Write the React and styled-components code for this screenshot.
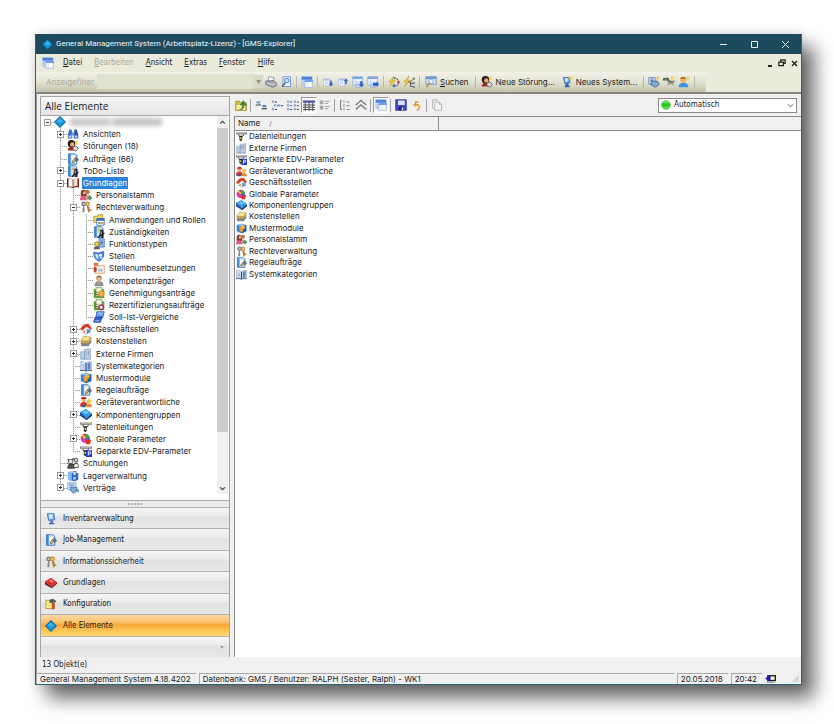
import React, { useState } from 'react';
import styled, { createGlobalStyle, css } from 'styled-components';

const GlobalStyle = createGlobalStyle`
  * {
    box-sizing: border-box;
  }

  body {
    margin: 0;
    background: #fff;
    color: #1a1a1a;
    font-family: 'Inter', 'DejaVu Sans', sans-serif;
    font-size: 8px;
    line-height: 12px;
  }

  button, input, select {
    font: inherit;
    color: inherit;
  }

  ul {
    list-style: none;
    margin: 0;
    padding: 0;
  }
`;

const narrow = css`
  font-family: 'DejaVu Sans Condensed', 'DejaVu Sans', sans-serif;
  font-size: 8px;
`;

/* ---------- icons ---------- */

const Svg = styled.svg`
  display: block;
  flex: none;
  width: ${({ $size }) => $size}px;
  height: ${({ $size }) => $size}px;
`;

const cable = (
  <>
    <path d='M0 2h16v3H0z' fill='#777' />
    <path d='M1 3h14' stroke='#ddd' />
    <path d='M4 5c0 3 1 3 2 3M11 5c0 2-1 3-3 3' stroke='#222' fill='none' strokeWidth='1.3' />
    <path d='M5 7h4v6l-2 2-2-2z' fill='#222' />
    <path d='M6 9h2v3H6z' fill='#d8e030' />
  </>
);

const note = (
  <>
    <path d='M2 1h9l2 2v12H2z' fill='#cfe6fb' stroke='#1d5fa8' />
    <path d='M2 1h3v14H2z' fill='#3c8ad6' />
  </>
);

const keys = (
  <>
    <circle cx='5' cy='4' r='2.5' fill='#bbb' stroke='#7a7a7a' strokeWidth='1.6' />
    <path d='M5 7v8M5 11H3M5 14H3' stroke='#8a8a8a' strokeWidth='2' />
    <circle cx='10' cy='4' r='2.5' fill='#f0c888' stroke='#c98a3c' strokeWidth='1.6' />
    <path d='M10 7l2 8M12 12h3M11 9h2' stroke='#b87428' strokeWidth='2' />
  </>
);

const windowShape = (
  <>
    <path d='M1 1h13v12H1z' fill='#dbe8fb' stroke='#a4bfe8' />
    <path d='M1 1h14v4H1z' fill='#4a82dc' />
    <path d='M2 7h2M2 9h2M2 11h2' stroke='#7ea2dc' />
    <path d='M5 6h10v9H5z' fill='#fff' stroke='#8fb0e4' />
    <path d='M5 5h11v3H5z' fill='#6f9fee' />
    <path d='M8 8v6' stroke='#b6cdee' />
  </>
);

const smallSheet = (
  <>
    <path d='M2 4h8v9H2z' fill='#eef5ff' stroke='#a9c2e8' />
    <path d='M2 4h8v2H2z' fill='#a4c0ee' />
    <path d='M4 8h4M4 10h4' stroke='#a9c2e8' />
  </>
);

const sheet = (
  <>
    <path d='M1 1h13v11H1z' fill='#eef5ff' stroke='#86a9dc' />
    <path d='M1 1h13v3H1z' fill='#7ca8ec' />
    <path d='M5 4v8M1 8h13' stroke='#b6cdee' />
  </>
);

const ICONS = {
  diamond: (
    <>
      <path d='M8 0l8 8-8 8-8-8z' fill='#0d5c96' />
      <path d='M8 1.500l6.500 6.500L8 14.500 1.500 8z' fill='#1498e0' />
      <path d='M8 3l4 4-4 2-4-2z' fill='#37b8f4' />
    </>
  ),
  mdi: windowShape,
  binoculars: (
    <>
      <path d='M3 2h3l1 4v8H1V9z' fill='#3c6cc0' />
      <path d='M10 2h3l2 7v5H9V6z' fill='#2a55a8' />
      <path d='M6 6h4v4H6z' fill='#6b98e0' />
      <path d='M2 10h4v3H2zM10 10h4v3h-4z' fill='#a8cbf6' />
    </>
  ),
  fault: (
    <>
      <circle cx='6' cy='5' r='5' fill='#241c18' />
      <circle cx='7' cy='6' r='3' fill='#e8a878' />
      <path d='M1 14c0-4 3-5 6-5s4 2 4 5z' fill='#9a2a22' />
      <path d='M8 9l4-1 3 3-3 4-4-2z' fill='#ddd' stroke='#555' />
      <path d='M11 1h4l-2 3h2l-4 4' fill='#f4d83c' />
    </>
  ),
  job: (
    <>
      {note}
      <path d='M6 4h5v8H6z' fill='#fff' />
      <path d='M7 11l5-6 2 2-5 6H7z' fill='#e8b440' stroke='#3a4a5c' strokeWidth='.8' />
      <path d='M10 9l3-3 3 3-3 3z' fill='#4c6c9c' />
    </>
  ),
  todo: (
    <>
      {note}
      <circle cx='8' cy='5' r='2' fill='#e8b040' />
      <path d='M10 5h4v4h2l-2 3v4h-3v-3l-3 3H6l3-5V8z' fill='#1c2430' />
      <path d='M10 7h2v4h-2z' fill='#d48a30' />
    </>
  ),
  openBook: (
    <>
      <path d='M0 2c3-1 6 0 8 2 2-2 5-3 8-2v12c-3-1-6 0-8 1-2-1-5-2-8-1z' fill='#7a1c1c' />
      <path d='M2 2c3 0 5 1 6 3v9c-1-1-4-2-6-1z' fill='#fff' />
      <path d='M8 5c1-4 4-5 6-4v11c-2 0-5 0-6 2z' fill='#f0e2c0' />
      <path d='M8 4v11' stroke='#402020' />
    </>
  ),
  people: (
    <>
      <path d='M1 4c0-4 8-4 8 1v5H1z' fill='#8a3c30' />
      <circle cx='6' cy='5' r='2' fill='#f0b890' />
      <path d='M0 15c0-5 2-6 5-6s4 2 4 6z' fill='#e05a7a' />
      <circle cx='10' cy='4' r='3' fill='#b07850' />
      <path d='M8 15c0-5 1-7 3-7 3 0 4 2 4 5z' fill='#d8a0a0' />
      <path d='M12 9h2v2h2v2h-2v2h-2v-2h-2v-2h2z' fill='#2f9a3a' />
    </>
  ),
  keys,
  appsRoles: (
    <>
      <path d='M1 3h5l1-2h6v10H1z' fill='#f4d85c' stroke='#b08c1c' />
      <path d='M5 6h10v9H5z' fill='#fff' stroke='#2a58a8' />
      <path d='M5 6h10v3H5z' fill='#2f6ad0' />
      <path d='M7 12h3' stroke='#2a7a3a' strokeWidth='2' />
      <path d='M11 12h3' stroke='#d06a2a' strokeWidth='2' />
    </>
  ),
  funcTypes: (
    <>
      <path d='M8 1h7v11H8z' fill='#9cc0ec' stroke='#3c64a4' />
      <path d='M10 4h3M10 6h3M10 8h3' stroke='#2a4c90' />
      <circle cx='5' cy='8' r='3' fill='#f4d050' stroke='#8a6a20' />
      <path d='M1 15c0-3 1-4 4-4s4 1 4 4z' fill='#5a5a5a' />
    </>
  ),
  shield: (
    <>
      <path d='M1 3l6 1 7-2c1 6-1 11-6 13C3 13 1 9 1 3z' fill='#4a8ae0' stroke='#2a58a8' />
      <path d='M3 5l4 1v7C4 11 3 8 3 5z' fill='#cfe2fa' />
      <circle cx='10' cy='7' r='2' fill='#f4f4ff' />
      <path d='M10 9l2 3' stroke='#cfe2fa' strokeWidth='2' />
    </>
  ),
  positions: (
    <>
      <path d='M3 5h12v10H3z' fill='#fdf6e8' stroke='#e08a3c' />
      <path d='M1 1h6v4H1z' fill='#e8703a' />
      <path d='M1 6l4 2v4l-4 2z' fill='#c03a2a' />
      <path d='M7 9h6v4H7z' fill='#a8c4ea' />
    </>
  ),
  person: (
    <>
      <circle cx='8' cy='4' r='3.500' fill='#8a5a34' />
      <circle cx='8' cy='5' r='2.500' fill='#f0c090' />
      <path d='M2 15c0-5 2-7 6-7s6 2 6 7z' fill='#8c9298' />
      <path d='M6 8h4l-2 5z' fill='#e8a03c' />
    </>
  ),
  approve: (
    <>
      <path d='M1 3h14v12H1z' fill='#5aa83c' />
      <path d='M4 1h8v11H4z' fill='#fdfbe8' stroke='#6a8a4a' />
      <path d='M2 7h5M2 10h5' stroke='#2a6a20' />
      <circle cx='11' cy='9' r='4' fill='#f2b23c' stroke='#c07818' />
    </>
  ),
  recert: (
    <>
      <path d='M1 3h14v12H1z' fill='#5aa83c' />
      <path d='M4 1h8v11H4z' fill='#fdfbe8' stroke='#6a8a4a' />
      <path d='M2 7h5M2 10h5' stroke='#2a6a20' />
      <circle cx='11' cy='11' r='3' fill='#fff' stroke='#c0285a' strokeWidth='2' />
    </>
  ),
  compare: (
    <>
      <path d='M5 1h10l-2 8H4z' fill='#6ca4f4' stroke='#2450a0' />
      <path d='M3 8h9l-2 7H1z' fill='#2f62d0' stroke='#1c3c8c' />
      <path d='M7 3h6M3 13h6' stroke='#cfe0fa' />
    </>
  ),
  house: (
    <>
      <path d='M3 8l5-4 6 4v4l-6 3-5-3z' fill='#f2f5f9' stroke='#a8b4c4' strokeWidth='.6' />
      <path d='M0 8l5-6 6-1 5 6-2 2-5-4-6 5z' fill='#d8401c' />
      <path d='M9 8l5 1v3l-5 3z' fill='#5c94d0' />
      <path d='M5 10h2v3H5z' fill='#e08030' />
    </>
  ),
  coins: (
    <>
      <path d='M5 2l10 1-4 5H1z' fill='#f8e08c' stroke='#b88c30' />
      <path d='M1 8h10l4-5v4l-4 5H1z' fill='#c89c48' />
      <path d='M1 11h10l4-4v3l-4 5H2z' fill='#7c828c' />
      <path d='M6 4h5' stroke='#fff8d8' />
    </>
  ),
  building: (
    <>
      <path d='M1 5h5v10H1zM6 2l8-1v14H6z' fill='#b4cae2' stroke='#86a2c2' />
      <path d='M8 4h1v9M11 4h1v9' stroke='#dfeaf6' />
      <path d='M3 7h2M3 10h2' stroke='#e8f0fa' />
    </>
  ),
  books: (
    <>
      <path d='M1 2c3 0 5 0 7 2 2-2 4-2 7-2v11c-3 0-5 0-7 2-2-2-4-2-7-2z' fill='#dde7f6' stroke='#8aa0c4' />
      <path d='M8 4v10' stroke='#2a4480' strokeWidth='1.6' />
      <path d='M10 4l4-1v9l-4 1z' fill='#5f84c4' />
      <path d='M3 5l3 1v6l-3-1z' fill='#a8bfe2' />
      <path d='M0 14h6l2 1 2-1h6' stroke='#203c70' fill='none' />
    </>
  ),
  cube: (
    <>
      <path d='M1 3l7-2 7 2v9l-7 3-7-3z' fill='#2f86dc' />
      <path d='M1 3l7 2 7-2-7-2z' fill='#8cc8f8' />
      <path d='M8 5l7-2v9l-7 3z' fill='#1c5cb0' />
      <path d='M5 5l5 1v7l-5-1z' fill='#f49a28' />
      <circle cx='10' cy='6' r='3' fill='#f8b040' />
    </>
  ),
  devices: (
    <>
      <circle cx='5' cy='5' r='3' fill='#f0a878' />
      <path d='M1 4c1-4 7-4 8 0z' fill='#b03020' />
      <path d='M0 14c0-5 2-6 5-6s5 1 5 6z' fill='#d83c2c' />
      <circle cx='12' cy='7' r='3' fill='#f4c04c' />
      <path d='M8 15c0-4 2-5 4-5s4 1 4 5z' fill='#e8902c' />
      <path d='M2 12h5v3H2z' fill='#2c5ca8' />
    </>
  ),
  component: (
    <>
      <path d='M0 4l8-4 8 6-7 6z' fill='#2c9ae8' />
      <path d='M0 4v5l9 6v-3z' fill='#1c4c98' />
      <path d='M9 12v3l7-6V6z' fill='#123464' />
      <path d='M3 4l5-2 4 3-4 2z' fill='#74ccf8' />
    </>
  ),
  cable,
  params: (
    <>
      <circle cx='7' cy='7' r='6' fill='#e03c50' />
      <path d='M7 1a6 6 0 0 1 6 6H7z' fill='#38a848' />
      <path d='M7 7h6a6 6 0 0 1-4 6z' fill='#3c60e0' />
      <path d='M1 7h6v6a6 6 0 0 1-6-6z' fill='#d83cc0' />
      <path d='M8 9l7 0-2 6H8z' fill='#e03020' />
      <path d='M3 3l4 4' stroke='#f8e04c' strokeWidth='2' />
    </>
  ),
  parked: (
    <>
      {cable}
      <path d='M8 7h8v9H8z' fill='#1c34c8' />
      <path d='M11 14V9h2a1.500 1.500 0 0 1 0 3h-2' fill='none' stroke='#fff' strokeWidth='1.300' />
    </>
  ),
  training: (
    <>
      <path d='M1 3l2 2M9 2L7 4' stroke='#222' strokeWidth='1.500' />
      <circle cx='5' cy='6' r='3' fill='#e8e8e8' stroke='#333' />
      <path d='M1 15c0-4 2-6 5-6s4 2 4 6z' fill='#5a5a5a' stroke='#222' />
      <circle cx='12' cy='4' r='2.500' fill='#c8d8b0' stroke='#333' />
      <path d='M9 14c0-5 1-6 3-6s4 2 3 6z' fill='#e8f0d8' stroke='#333' />
      <path d='M0 8l5 3 9-3' stroke='#333' fill='none' />
    </>
  ),
  storage: (
    <>
      <path d='M1 3l5-2v14l-5-2z' fill='#88bcf4' />
      <path d='M6 4h9v9l-5 2-4-1z' fill='#2c68c8' />
      <path d='M8 2h4v5H8z' fill='#dfe8f4' stroke='#3c64a4' />
      <circle cx='10' cy='11' r='2' fill='#8cd0fa' />
    </>
  ),
  contract: (
    <>
      <path d='M1 1h11v9H1z' fill='#dcebfa' stroke='#6c94c4' />
      <path d='M3 3h7M3 5h7M3 7h4' stroke='#5c88bc' />
      <path d='M5 7h8v5l-4 3-4-3z' fill='#7ab0dc' stroke='#3a6898' />
      <path d='M12 10h4v3h-4z' fill='#4c84b8' />
    </>
  ),
  monitor: (
    <>
      <path d='M3 1h9l1 8-8 1z' fill='#7cb4f4' stroke='#2c64b8' />
      <path d='M5 2h5v5l-4 1z' fill='#e0f0ff' />
      <path d='M7 10h4v3H7z' fill='#4478c8' />
      <path d='M5 15l1-2h5l2 2z' fill='#3c60a0' />
    </>
  ),
  redBook: (
    <>
      <path d='M0 6l8-5 8 6-7 6z' fill='#e02c2c' />
      <path d='M0 6v4l9 5v-2z' fill='#7c1414' />
      <path d='M9 13v2l7-6V7z' fill='#5c1c1c' />
      <path d='M5 5l3-2 4 3-3 2z' fill='#f87c70' />
    </>
  ),
  config: (
    <>
      <path d='M1 3h5l1 2h5v9H1z' fill='#f8e880' stroke='#a89430' />
      <path d='M6 3c3-3 7-2 9 2l-2 1-2-1-1 2-4-1z' fill='#4c5460' />
      <path d='M9 6h4v9H9z' fill='#c8542c' />
    </>
  ),
  printer: (
    <>
      <path d='M5 1l7 1-1 6-7-1z' fill='#f4f8ff' stroke='#7c8898' />
      <path d='M1 7l11-1 3 3v4l-5 2-9-4z' fill='#a4a8ac' stroke='#5c6068' />
      <path d='M2 9l8 3 4-2' stroke='#eee' fill='none' />
    </>
  ),
  preview: (
    <>
      <path d='M4 1h10v13H4z' fill='#eef6ff' stroke='#4c84d8' />
      <circle cx='9' cy='6' r='3' fill='#bfe0fa' stroke='#2c60b0' />
      <path d='M7 9l-4 5' stroke='#3c64a8' strokeWidth='2' />
    </>
  ),
  sheetDown: (
    <>
      {smallSheet}
      <path d='M11 6h2v4h2l-3 4-3-4h2z' fill='#2c60c8' />
    </>
  ),
  sheetUp: (
    <>
      {smallSheet}
      <path d='M11 11h2V7h2l-3-4-3 4h2z' fill='#2c60c8' />
    </>
  ),
  sheetPlus: (
    <>
      {sheet}
      <path d='M5 11h6v4H5z' fill='#c4d8f6' stroke='#86a9dc' />
      <path d='M11 7h3v4h2l-3 4-4-4h2z' fill='#2460d0' />
    </>
  ),
  sheetMinus: (
    <>
      {sheet}
      <path d='M5 11h6v4H5z' fill='#c4d8f6' stroke='#86a9dc' />
      <path d='M8 9h5V7l3 4-3 4v-2H8z' fill='#2460d0' />
    </>
  ),
  bolt: (
    <>
      <path d='M8 0L1 8h4l-3 6 8-8H6z' fill='#f6cc34' stroke='#b08a20' strokeWidth='.6' />
      <path d='M9 3c4 0 5 3 5 6s-3 5-6 4' stroke='#667' fill='none' strokeWidth='1.500' strokeDasharray='2 1' />
      <circle cx='9' cy='3' r='1.500' fill='#58a048' />
      <circle cx='14' cy='8' r='1.800' fill='#c04848' />
      <circle cx='8' cy='13' r='2' fill='#4868c0' />
    </>
  ),
  boltTree: (
    <>
      <path d='M8 0L1 8h4l-3 6 8-8H6z' fill='#f6cc34' stroke='#b08a20' strokeWidth='.6' />
      <path d='M7 8h3v6h4M10 8l4-4M10 10h4' stroke='#556' fill='none' strokeWidth='1.300' />
      <path d='M13 2h3v3h-3zM13 8h3v3h-3zM13 13h3v3h-3z' fill='#8a8f88' />
    </>
  ),
  search: (
    <>
      <path d='M1 1h14v10H1z' fill='#cfe6fa' stroke='#5c88c0' />
      <path d='M1 1h14v3H1z' fill='#6c9cdc' />
      <circle cx='8' cy='7' r='3' fill='#e8f6ff' stroke='#88a' />
      <path d='M6 9l-4 6' stroke='#c08c38' strokeWidth='2' />
    </>
  ),
  newSystem: (
    <>
      <path d='M3 2h8l1 7-7 1z' fill='#6cb0f4' stroke='#2c58b0' />
      <path d='M5 3h4v4l-3 1z' fill='#d8ecff' />
      <path d='M6 10h4v3H6zM4 15l2-2h5l1 2z' fill='#3858a8' />
      <path d='M13 0v6M10 3h6M11 1l4 4M15 1l-4 4' stroke='#f4cc38' />
    </>
  ),
  newContract: (
    <>
      <path d='M1 2h9v9H1z' fill='#cfe2f6' stroke='#5c84b8' />
      <path d='M3 4h5M3 6h5' stroke='#3c68a8' />
      <path d='M4 7h9l2 4-5 4-6-3z' fill='#7ca8cc' stroke='#3a5c80' />
      <path d='M13 0v6M10 3h6' stroke='#f0cc40' strokeWidth='1.500' />
    </>
  ),
  newCable: (
    <>
      <path d='M0 3l7-1 2 4 6 1v2L7 9 5 6 0 6z' fill='#4a6a4a' />
      <path d='M3 4l11 8M6 12l9-6' stroke='#8a9088' strokeWidth='1.600' />
      <path d='M12 0v5M10 2h5' stroke='#f0cc40' strokeWidth='1.500' />
    </>
  ),
  newPerson: (
    <>
      <circle cx='7' cy='5' r='4' fill='#f0b060' />
      <path d='M3 4c0-4 7-4 8 0z' fill='#b87828' />
      <path d='M1 15c0-4 2-6 6-6s7 2 7 6z' fill='#3c94e0' />
      <path d='M13 0v6M10 3h6' stroke='#f4d048' strokeWidth='1.500' />
    </>
  ),
  folderUp: (
    <>
      <path d='M1 3h5l2 2h7v10H1z' fill='#e8c040' stroke='#8a6c18' />
      <path d='M1 7h12l2 8H1z' fill='#fae88c' stroke='#8a6c18' strokeWidth='.5' />
      <path d='M6 14c3 0 4-3 4-6H7l4-6 4 6h-3c0 4-2 7-6 6z' fill='#2f9438' stroke='#1c6420' strokeWidth='.5' />
    </>
  ),
  largeIcons: (
    <>
      <path d='M2 3h5v3H2z' fill='#7ca0dc' />
      <path d='M1 8h7' stroke='#555' strokeWidth='1.500' />
      <path d='M10 8h5v3h-5z' fill='#5c80c8' />
      <path d='M9 13h7' stroke='#444' strokeWidth='1.500' />
    </>
  ),
  smallIcons: (
    <>
      <path d='M1 2h3v3H1zM4 7h3v3H4zM1 12h3v3H1zM9 7h3v3H9z' fill='#88a8e0' />
      <path d='M5 4h3M8 9h1M5 14h3M13 9h3' stroke='#444' strokeWidth='1.500' />
    </>
  ),
  listView: (
    <>
      <path d='M0 2h3v3H0zM0 7h3v3H0zM0 12h3v3H0zM9 2h3v3H9zM9 7h3v3H9zM9 12h3v3H9z' fill='#88a8e0' />
      <path d='M4 4h3M4 9h3M4 14h3M13 4h3M13 9h3M13 14h3' stroke='#555' strokeWidth='1.300' />
    </>
  ),
  detailView: (
    <>
      <path d='M0 2h16v3H0z' fill='#4850a0' />
      <path d='M0 8h16M0 11h16M0 14h16M3 5v11M8 5v11M13 5v11' stroke='#555' strokeWidth='1.400' />
    </>
  ),
  tiles: (
    <>
      <path d='M1 2h5v5H1zM1 9h5v5H1z' fill='#a8a8a8' />
      <path d='M8 3h6M8 6h4M8 10h6M8 13h4' stroke='#a0a0a0' strokeWidth='1.500' />
    </>
  ),
  groups: (
    <>
      <path d='M4 2H2v12h2' stroke='#777' fill='none' strokeWidth='1.300' />
      <path d='M5 2h3v3H5zM5 7h3v3H5zM5 12h3v3H5z' fill='#bbb' />
      <path d='M10 4h4M10 9h4M10 14h4' stroke='#888' strokeWidth='1.300' />
    </>
  ),
  collapse: (
    <path d='M1 8l7-6 7 6M1 14l7-6 7 6' stroke='#7c7c7c' fill='none' strokeWidth='2' />
  ),
  save: (
    <>
      <path d='M1 1h14v14H1z' fill='#4848c8' stroke='#20208c' />
      <path d='M4 2h9v6H4z' fill='#d8e4fa' />
      <path d='M5 10h7v5H5z' fill='#1c1c6c' />
      <path d='M9 11h2v4H9z' fill='#e8e8f4' />
    </>
  ),
  undo: (
    <path
      d='M10 4H6v4c3-1 5 0 5 3s-1 3-3 4M3 7l3 2 1-3'
      stroke='#f09434'
      fill='none'
      strokeWidth='2'
    />
  ),
  copy: (
    <path d='M2 1h6v2M2 1v11h3M5 4h6l3 3v8H5zM11 4v3h3' stroke='#b0b0b0' fill='#f6f6f6' strokeWidth='1.200' />
  ),
  session: (
    <>
      <path d='M3 3h13v9H3z' fill='#222' />
      <path d='M8 5h6v5H8z' fill='#f4f4e8' />
      <path d='M0 8l6-4v8z' fill='#1c1ce0' />
      <path d='M2 13h11v1H2z' fill='#777' />
    </>
  ),
};

const Icon = ({ name, size = 12 }) => (
  <Svg $size={size} viewBox='0 0 16 16' aria-hidden='true'>
    {ICONS[name]}
  </Svg>
);

/* ---------- window ---------- */

const Desktop = styled.div`
  min-height: 100vh;
  display: flex;
  padding: 34px 32px 39px 35px;
`;

const Window = styled.div`
  flex: 1;
  min-width: 0;
  display: flex;
  flex-direction: column;
  border: 1px solid #2b6176;
  border-top: 0;
  background: #f0f0f0;
  box-shadow: 12px 13px 18px rgba(0, 0, 0, 0.6), 0 0 10px rgba(0, 0, 0, 0.12);
`;

const TitleBar = styled.header`
  display: flex;
  align-items: center;
  height: 20px;
  padding-left: 6px;
  background: #1d4b5e;
  color: #f2f6f8;
`;

const TitleText = styled.h1`
  flex: 1;
  margin: 0 0 0 3px;
  font-family: 'Roboto', 'Open Sans', sans-serif;
  font-size: 8px;
  font-weight: 400;
  white-space: nowrap;
`;

const CaptionButton = styled.button`
  display: grid;
  place-items: center;
  width: ${({ $small }) => ($small ? 12 : 31)}px;
  height: ${({ $small }) => ($small ? 12 : 20)}px;
  padding: 0;
  border: 0;
  background: none;
`;

const MenuBar = styled.nav`
  ${narrow}
  display: flex;
  align-items: center;
  height: 18px;
  padding: 0 1px 0 6px;
  background: #ebebdc;
`;

const MenuButton = styled.button`
  margin-left: ${({ $first }) => ($first ? 3 : 0)}px;
  padding: 0 6px;
  border: 0;
  background: none;
  line-height: 12px;

  &:disabled {
    color: #a9a99d;
  }
`;

const Spacer = styled.span`
  flex: 1;
`;

const ToolArea = styled.div`
  background: #ebebdc;
  border-bottom: 2px solid #86867e;
`;

const Toolbar = styled.div`
  display: flex;
  align-items: center;
  width: max-content;
  height: 20px;
  padding: 0 9px 1px 10px;
  border-radius: 0 0 2px 0;
  background: linear-gradient(#f3f3ea, #e2e2d3 50%, #c3c3ad);
`;

const FilterLabel = styled.label`
  width: 51px;
  color: #a9a99d;
`;

const FilterInput = styled.input`
  width: 157px;
  height: 15px;
  padding: 0 2px;
  border: 0;
  background: #e1e1d0;
`;

const FilterArrow = styled.button`
  width: 9px;
  height: 13px;
  padding: 0;
  border: 0;
  background: #dadac9;
  color: #8d8d80;
  font-size: 5px;
  line-height: 12px;
`;

const ToolButton = styled.button`
  display: flex;
  align-items: center;
  justify-content: center;
  gap: 3px;
  min-width: 15px;
  height: 16px;
  padding: ${({ $labelled }) => ($labelled ? '0 3px' : '0 1px')};
  border: 0;
  background: none;
  white-space: nowrap;
`;

const Separator = styled.span`
  width: 1px;
  height: 12px;
  margin: 0 2px 0 3px;
  background: #b9b9ab;
`;

/* ---------- body ---------- */

const Body = styled.main`
  flex: 1;
  display: flex;
  min-height: 0;
  padding-left: 3px;
  border-left: 1px solid #9a9a9a;
`;

const Sidebar = styled.aside`
  display: flex;
  flex-direction: column;
  flex: none;
  width: 190px;
  margin-top: 2px;
  border: 1px solid #a5a5a5;
  border-bottom: 0;
`;

const SidebarTitle = styled.h2`
  margin: 0;
  padding-left: 4px;
  font-family: 'Open Sans', 'Noto Sans', sans-serif;
  font-size: 10px;
  font-weight: 400;
  line-height: 18px;
  background: linear-gradient(#f6f6f6, #e6e6e6);
  border-bottom: 1px solid #a5a5a5;
`;

const TreePane = styled.div`
  flex: 1;
  display: flex;
  padding-bottom: 6px;
  background: #fff;
`;

const Tree = styled.ul`
  flex: 1;
  display: flex;
  flex-direction: column;
`;

const TreeRow = styled.li`
  flex: 1 1 12px;
  display: flex;
  align-items: center;
`;

const dots = 'repeating-linear-gradient(#9c9c9c 0 1px, #e4e4e4 1px 2px)';
const dotsAcross =
  'repeating-linear-gradient(90deg, #9c9c9c 0 1px, #e4e4e4 1px 2px)';

const Guide = styled.span`
  align-self: stretch;
  display: flex;
  align-items: center;
  justify-content: center;
  width: 13px;
  background-repeat: no-repeat;
  background-image: ${({ $line }) => ($line ? dots : 'none')},
    ${({ $branch }) => ($branch ? dotsAcross : 'none')};
  background-position: 6px 0, 6px 6px;
  background-size: 1px ${({ $line }) => ($line === 'half' ? '6px' : '100%')},
    7px 1px;
`;

const Toggle = styled.button`
  display: grid;
  place-items: center;
  width: 7px;
  height: 7px;
  padding: 0;
  border: 1px solid #9a9a9a;
  background: #fff;
`;

const TreeLabel = styled.span`
  margin-left: 3px;
  padding: 0 1px;
  white-space: nowrap;
  line-height: 12px;
  ${({ $selected }) =>
    $selected &&
    css`
      background: #2a84d8;
      color: #fff;
    `}
`;

const Redacted = styled.span`
  width: 92px;
  height: 8px;
  margin-left: 4px;
  background: linear-gradient(90deg, #c9c9c9 40%, #dedede 45%, #c4c4c4 50%);
  filter: blur(2px);
`;

const ScrollBar = styled.div`
  display: flex;
  flex-direction: column;
  width: 11px;
  margin-right: 1px;
  background: #f0f0f0;
`;

const ScrollButton = styled.button`
  display: grid;
  place-items: center;
  height: 12px;
  padding: 0;
  border: 0;
  background: none;
`;

const ScrollTrack = styled.div`
  flex: 1;
`;

const ScrollThumb = styled.div`
  height: 86%;
  background: #cdcdcd;
`;

const Splitter = styled.div`
  display: flex;
  align-items: center;
  justify-content: center;
  height: 7px;
  border-top: 1px solid #a5a5a5;
  background: #ececec;
  gap: 1px;
`;

const Grip = styled.span`
  width: 2px;
  height: 2px;
  background: #b4b4b4;
`;

const NavList = styled.ul`
  display: grid;
  grid-template-rows: repeat(7, 1fr);
  height: 150px;
`;

const NavButton = styled.button`
  ${narrow}
  display: flex;
  align-items: center;
  gap: 6px;
  width: 100%;
  height: 100%;
  padding: 1px 4px 0;
  border: 0;
  border-top: 1px solid #b0b0b0;
  background: ${({ $active }) =>
    $active
      ? 'linear-gradient(#fbd9a4, #fcc069 35%, #fba836 45%, #fddc70)'
      : 'linear-gradient(#f5f5f5, #ececec 40%, #e2e2e2 45%, #e8e8e8)'};
`;

const NavMore = styled(NavButton)`
  justify-content: flex-end;
`;

const Content = styled.section`
  flex: 1;
  min-width: 0;
  display: flex;
  flex-direction: column;
  margin-left: 3px;
`;

const ViewBar = styled.div`
  display: flex;
  align-items: center;
  height: 22px;
  padding-right: 4px;
`;

const ViewButton = styled.button`
  display: grid;
  place-items: center;
  width: 16px;
  height: 16px;
  padding: 0;
  border: 1px solid ${({ $pressed }) => ($pressed ? '#9a9a9a' : 'transparent')};
  border-right-color: ${({ $pressed }) => ($pressed ? '#fff' : 'transparent')};
  border-bottom-color: ${({ $pressed }) => ($pressed ? '#fff' : 'transparent')};
  background: ${({ $pressed }) => ($pressed ? '#f8f8f8' : 'none')};
`;

const ViewSeparator = styled.span`
  width: 1px;
  height: 13px;
  margin: 0 2px 0 1px;
  background: #a5a5a5;
`;

const ModeBox = styled.label`
  ${narrow}
  display: flex;
  align-items: center;
  width: 139px;
  height: 15px;
  padding: 0 2px;
  border: 1px solid #8c8c8c;
  background: #fff;
`;

const Led = styled.span`
  width: 10px;
  height: 10px;
  margin-right: 3px;
  border: 1px solid #7fc87f;
  border-radius: 50%;
  background: linear-gradient(#8cea7c, #17c414 45%, #5ef04e);
`;

const ModeSelect = styled.select`
  flex: 1;
  height: 12px;
  padding: 0;
  border: 0;
  background: none;
  appearance: none;
`;

const ListPane = styled.div`
  flex: 1;
  margin-left: 1px;
  border-left: 1px solid #8a8a8a;
  border-top: 1px solid #8a8a8a;
  background: #fff;
`;

const ObjectTable = styled.table`
  width: 100%;
  border-collapse: collapse;
  table-layout: fixed;

  thead tr {
    height: 13px;
    background: #f0f0f0;
    border-bottom: 1px solid #8a8a8a;
  }

  thead th {
    padding: 0 3px;
    font-weight: 400;
    line-height: 12px;
    text-align: left;
  }

  th:first-child {
    width: 203px;
    border-right: 1px solid #8a8a8a;
  }

  tbody {
    display: grid;
    grid-template-rows: repeat(13, 1fr);
    height: 149px;
  }

  td {
    display: flex;
    align-items: center;
    gap: 2px;
    height: 100%;
    padding: 0 0 0 1px;
    line-height: 11px;
    white-space: nowrap;
  }
`;

const SortMark = styled.span`
  margin-left: 9px;
  font-size: 7px;
  color: #777;
`;

const CountBar = styled.div`
  ${narrow}
  height: 16px;
  padding-left: 5px;
  border-left: 1px solid #9a9a9a;
  line-height: 16px;
`;

const StatusBar = styled.footer`
  display: flex;
  gap: 3px;
  height: 11px;
  padding-right: 2px;
  line-height: 10px;
`;

const StatusCell = styled.span`
  flex: ${({ $grow }) => ($grow ? 1 : 'none')};
  padding: 0 5px 0 3px;
  border-top: 1px solid #aaa;
  border-left: 1px solid #aaa;
  white-space: nowrap;
`;

const StatusIcon = styled.span`
  display: flex;
  align-items: center;
  justify-content: space-between;
  width: 34px;
`;

/* ---------- data ---------- */

const TREE = [
  [1, 'binoculars', 'Ansichten', '+'],
  [1, 'fault', 'Störungen (18)'],
  [1, 'job', 'Aufträge (66)'],
  [1, 'todo', 'ToDo-Liste', '+'],
  [1, 'openBook', 'Grundlagen', '-'],
  [2, 'people', 'Personalstamm'],
  [2, 'keys', 'Rechteverwaltung', '-'],
  [3, 'appsRoles', 'Anwendungen und Rollen'],
  [3, 'todo', 'Zuständigkeiten'],
  [3, 'funcTypes', 'Funktionstypen'],
  [3, 'shield', 'Stellen'],
  [3, 'positions', 'Stellenumbesetzungen'],
  [3, 'person', 'Kompetenzträger'],
  [3, 'approve', 'Genehmigungsanträge'],
  [3, 'recert', 'Rezertifizierungsaufträge'],
  [3, 'compare', 'Soll-Ist-Vergleiche'],
  [2, 'house', 'Geschäftsstellen', '+'],
  [2, 'coins', 'Kostenstellen', '+'],
  [2, 'building', 'Externe Firmen', '+'],
  [2, 'books', 'Systemkategorien'],
  [2, 'cube', 'Mustermodule'],
  [2, 'job', 'Regelaufträge'],
  [2, 'devices', 'Geräteverantwortliche'],
  [2, 'component', 'Komponentengruppen', '+'],
  [2, 'cable', 'Datenleitungen'],
  [2, 'params', 'Globale Parameter', '+'],
  [2, 'parked', 'Geparkte EDV-Parameter'],
  [1, 'training', 'Schulungen'],
  [1, 'storage', 'Lagerverwaltung', '+'],
  [1, 'contract', 'Verträge', '+'],
];

const OBJECTS = [
  ['cable', 'Datenleitungen'],
  ['building', 'Externe Firmen'],
  ['parked', 'Geparkte EDV-Parameter'],
  ['devices', 'Geräteverantwortliche'],
  ['house', 'Geschäftsstellen'],
  ['params', 'Globale Parameter'],
  ['component', 'Komponentengruppen'],
  ['coins', 'Kostenstellen'],
  ['cube', 'Mustermodule'],
  ['people', 'Personalstamm'],
  ['keys', 'Rechteverwaltung'],
  ['job', 'Regelaufträge'],
  ['books', 'Systemkategorien'],
];

const NAV = [
  ['monitor', 'Inventarverwaltung'],
  ['job', 'Job-Management'],
  ['keys', 'Informationssicherheit'],
  ['redBook', 'Grundlagen'],
  ['config', 'Konfiguration'],
  ['diamond', 'Alle Elemente'],
];

const MENU = ['Datei', 'Bearbeiten', 'Ansicht', 'Extras', 'Fenster', 'Hilfe'];

const TOOLS = [
  ['printer'],
  ['preview'],
  null,
  ['mdi'],
  null,
  ['sheetDown'],
  ['sheetUp'],
  ['sheetPlus'],
  ['sheetMinus'],
  null,
  ['bolt'],
  ['boltTree'],
  null,
  ['search', 'Suchen', true],
  null,
  ['fault', 'Neue Störung...'],
  ['newSystem', 'Neues System...'],
  null,
  ['newContract'],
  ['newCable'],
  ['newPerson'],
  null,
];

const VIEW_TOOLS = [
  'folderUp',
  null,
  'largeIcons',
  'smallIcons',
  'listView',
  'detailView',
  'tiles',
  null,
  'groups',
  'collapse',
  null,
  'mdi',
  null,
  'save',
  'undo',
  null,
  'copy',
];

const PRESSED = ['detailView', 'mdi'];

/* ---------- parts ---------- */

const Mnemonic = ({ text }) => (
  <>
    <u>{text[0]}</u>
    {text.slice(1)}
  </>
);

const Stroke = ({ d, size = 9, color = '#444', width = 1 }) => (
  <Svg $size={size} viewBox='0 0 9 9' aria-hidden='true'>
    <path d={d} fill='none' stroke={color} strokeWidth={width} />
  </Svg>
);

// a branch line stops at its node when no later row has the same level
const hasNext = (index, level) => {
  for (let i = index + 1; i < TREE.length; i++) {
    if (TREE[i][0] < level) return false;
    if (TREE[i][0] === level) return true;
  }
  return false;
};

const TreeToggle = ({ state, label }) => (
  <Toggle aria-label={label} aria-expanded={state === '-'}>
    <Svg $size={5} viewBox='0 0 5 5' aria-hidden='true'>
      <path d={state === '+' ? 'M1 2h3v1H1zM2 1h1v3H2z' : 'M1 2h3v1H1z'} fill='#333' />
    </Svg>
  </Toggle>
);

const TreeNode = ({ row, index, selected, onSelect }) => {
  const [level, icon, text, state] = row;
  const guides = [];
  for (let l = 0; l < level; l++) {
    guides.push(<Guide key={l} $line={l > 0 && hasNext(index, l) ? 'full' : null} />);
  }

  return (
    <TreeRow onClick={() => onSelect(text)}>
      {guides}
      <Guide $line={hasNext(index, level) ? 'full' : 'half'} $branch>
        {state && <TreeToggle state={state} label={text} />}
      </Guide>
      <Icon name={icon} />
      <TreeLabel $selected={selected}>{text}</TreeLabel>
    </TreeRow>
  );
};

const App = () => {
  const [selected, setSelected] = useState('Grundlagen');
  const [activeNav, setActiveNav] = useState('Alle Elemente');

  return (
    <>
      <GlobalStyle />
      <Desktop>
        <Window>
          <TitleBar>
            <Icon name='diamond' size={11} />
            <TitleText>
              General Management System (Arbeitsplatz-Lizenz) - [GMS-Explorer]
            </TitleText>
            <CaptionButton aria-label='Minimieren'>
              <Stroke d='M1 4.500h7' color='#e8eef0' />
            </CaptionButton>
            <CaptionButton aria-label='Maximieren'>
              <Stroke d='M1.500 1.500h6v6h-6z' color='#e8eef0' />
            </CaptionButton>
            <CaptionButton aria-label='Schließen'>
              <Stroke d='M1 1l7 7M8 1l-7 7' color='#e8eef0' />
            </CaptionButton>
          </TitleBar>

          <MenuBar>
            <Icon name='mdi' />
            {MENU.map((item, i) => (
              <MenuButton key={item} $first={i === 0} disabled={item === 'Bearbeiten'}>
                <Mnemonic text={item} />
              </MenuButton>
            ))}
            <Spacer />
            <CaptionButton $small aria-label='Fenster minimieren'>
              <Stroke d='M2 7h4' width={2} color='#222' />
            </CaptionButton>
            <CaptionButton $small aria-label='Fenster wiederherstellen'>
              <Stroke d='M3 3V1h5v4H6M1 3.500h5v4H1z' size={8} width={1.4} color='#222' />
            </CaptionButton>
            <CaptionButton $small aria-label='Fenster schließen'>
              <Stroke d='M2 2l5 5M7 2l-5 5' width={1.4} color='#222' />
            </CaptionButton>
          </MenuBar>

          <ToolArea>
            <Toolbar>
              <FilterLabel htmlFor='filter'>Anzeigefilter</FilterLabel>
              <FilterInput id='filter' disabled />
              <FilterArrow aria-label='Filter wählen'>▼</FilterArrow>
              {TOOLS.map((tool, i) =>
                tool ? (
                  <ToolButton key={i} $labelled={!!tool[1]} aria-label={tool[1] || tool[0]}>
                    <Icon name={tool[0]} />
                    {tool[1] && (
                      <span>{tool[2] ? <Mnemonic text={tool[1]} /> : tool[1]}</span>
                    )}
                  </ToolButton>
                ) : (
                  <Separator key={i} />
                )
              )}
            </Toolbar>
          </ToolArea>

          <Body>
            <Sidebar>
              <SidebarTitle>Alle Elemente</SidebarTitle>
              <TreePane>
                <Tree>
                  <TreeRow>
                    <Guide $branch>
                      <TreeToggle state='-' label='Alle' />
                    </Guide>
                    <Icon name='diamond' />
                    <Redacted />
                  </TreeRow>
                  {TREE.map((row, i) => (
                    <TreeNode
                      key={row[2]}
                      row={row}
                      index={i}
                      selected={selected === row[2]}
                      onSelect={setSelected}
                    />
                  ))}
                </Tree>
                <ScrollBar>
                  <ScrollButton aria-label='Nach oben'>
                    <Stroke d='M1.500 6l3-3 3 3' size={7} width={1.6} />
                  </ScrollButton>
                  <ScrollTrack>
                    <ScrollThumb />
                  </ScrollTrack>
                  <ScrollButton aria-label='Nach unten'>
                    <Stroke d='M1.500 3l3 3 3-3' size={7} width={1.6} />
                  </ScrollButton>
                </ScrollBar>
              </TreePane>
              <Splitter>
                <Grip />
                <Grip />
                <Grip />
                <Grip />
                <Grip />
              </Splitter>
              <NavList>
                {NAV.map(([icon, text]) => (
                  <li key={text}>
                    <NavButton $active={activeNav === text} onClick={() => setActiveNav(text)}>
                      <Icon name={icon} />
                      {text}
                    </NavButton>
                  </li>
                ))}
                <li>
                  <NavMore aria-label='Mehr'>
                    <Stroke d='M2 4h5M3 5h3M4 6h1' size={6} color='#777' />
                  </NavMore>
                </li>
              </NavList>
            </Sidebar>

            <Content>
              <ViewBar>
                {VIEW_TOOLS.map((name, i) =>
                  name ? (
                    <ViewButton key={i} $pressed={PRESSED.includes(name)} aria-label={name}>
                      <Icon name={name} />
                    </ViewButton>
                  ) : (
                    <ViewSeparator key={i} />
                  )
                )}
                <Spacer />
                <ModeBox>
                  <Led />
                  <ModeSelect aria-label='Modus'>
                    <option>Automatisch</option>
                  </ModeSelect>
                  <Stroke d='M1 3l3.500 3L8 3' size={7} />
                </ModeBox>
              </ViewBar>
              <ListPane>
                <ObjectTable>
                  <thead>
                    <tr>
                      <th>
                        Name<SortMark>∕</SortMark>
                      </th>
                      <th aria-label='Leer' />
                    </tr>
                  </thead>
                  <tbody>
                    {OBJECTS.map(([icon, text]) => (
                      <tr key={text}>
                        <td>
                          <Icon name={icon} size={11} />
                          <span>{text}</span>
                        </td>
                      </tr>
                    ))}
                  </tbody>
                </ObjectTable>
              </ListPane>
            </Content>
          </Body>

          <CountBar>13 Objekt(e)</CountBar>
          <StatusBar>
            <StatusCell>General Management System 4.18.4202</StatusCell>
            <StatusCell $grow>
              Datenbank: GMS / Benutzer: RALPH (Sester, Ralph) - WK1
            </StatusCell>
            <StatusCell>20.05.2018</StatusCell>
            <StatusCell>20:42</StatusCell>
            <StatusIcon>
              <Icon name='session' size={11} />
              <Stroke d='M9 1L1 9M9 4L4 9M9 7L7 9' size={7} color='#aaa' />
            </StatusIcon>
          </StatusBar>
        </Window>
      </Desktop>
    </>
  );
};

export default App;
